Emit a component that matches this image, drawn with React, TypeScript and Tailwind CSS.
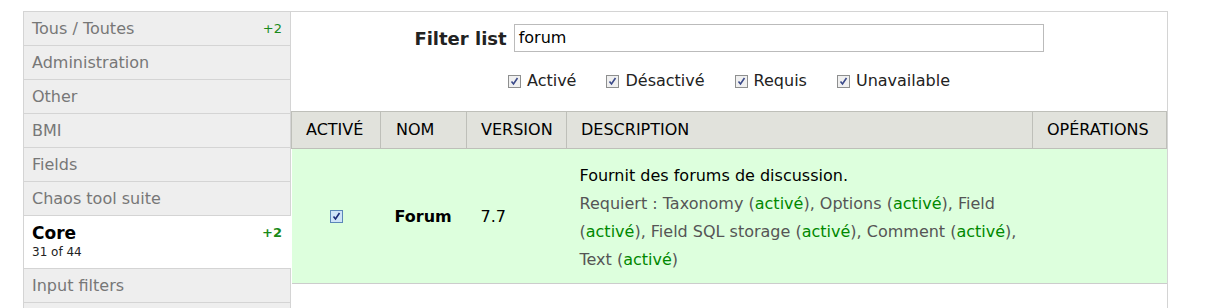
import React from 'react';

interface Category {
  label: string;
  count?: string;
  sub?: string;
  active?: boolean;
}

const categories: Category[] = [
  { label: 'Tous / Toutes', count: '+2' },
  { label: 'Administration' },
  { label: 'Other' },
  { label: 'BMI' },
  { label: 'Fields' },
  { label: 'Chaos tool suite' },
  { label: 'Core', count: '+2', sub: '31 of 44', active: true },
  { label: 'Input filters' },
];

const CheckBox: React.FC<{ focus?: boolean }> = ({ focus }) => (
  <span
    className={
      focus
        ? 'inline-flex w-[13px] h-[13px] items-center justify-center border border-[#5b87b8] bg-[#cfe4f8]'
        : 'inline-flex w-[13px] h-[13px] items-center justify-center border border-[#8e8f8f] bg-[#f0f0f0]'
    }
  >
    <svg width="9" height="9" viewBox="0 0 9 9">
      <path d="M1.5 4.5 L3.5 7 L7.5 1" fill="none" stroke={focus ? '#1a2a78' : '#3b4a8a'} strokeWidth="1.6" />
    </svg>
  </span>
);

const Ok: React.FC = () => <span className="text-[#008800]">activé</span>;

const App: React.FC = () => {
  return (
    <div className="w-[1205px] h-[308px] overflow-hidden bg-white pl-[23px] pt-[11px] font-['DejaVu_Sans',sans-serif]">
      <div className="flex items-start">
        {/* Sidebar */}
        <div className="w-[268px] border-l border-t border-[#d4d4d4]">
          {categories.map((c) =>
            c.active ? (
              <div key={c.label} className="bg-white border-b border-[#d4d4d4] pl-[8px] pr-[9px] pt-[6px] h-[53px]">
                <div className="flex justify-between items-center">
                  <span className="text-[17px] font-bold text-black leading-[22px]">{c.label}</span>
                  <span className="text-[13px] font-semibold text-[#1a8a1a]">{c.count}</span>
                </div>
                <div className="text-[12px] text-[#222] leading-[16px]">{c.sub}</div>
              </div>
            ) : (
              <div
                key={c.label}
                className="bg-[#eeeeee] border-b border-r border-[#d4d4d4] h-[34px] pl-[8px] pr-[8px] flex items-center justify-between"
              >
                <span className="text-[16px] text-[#777777]">{c.label}</span>
                {c.count && <span className="text-[13px] text-[#1a8a1a]">{c.count}</span>}
              </div>
            )
          )}
          <div className="bg-[#eeeeee] border-r border-[#d4d4d4] h-[34px]" />
        </div>

        {/* Main */}
        <div className="w-[877px] h-[300px] border-t border-r border-[#d4d4d4] bg-white">
          <div className="flex justify-center items-center gap-[7px] pt-[12px]">
            <label className="text-[18px] font-bold text-[#222]">Filter list</label>
            <div className="w-[530px] h-[28px] border border-[#bbbbbb] flex items-center px-[4px] text-[16px] text-black">forum</div>
          </div>
          <div className="flex justify-center items-center gap-[30px] mt-[17px] text-[16px] text-[#222]">
            {['Activé', 'Désactivé', 'Requis', 'Unavailable'].map((l) => (
              <span key={l} className="flex items-center gap-[6px]">
                <CheckBox />
                {l}
              </span>
            ))}
          </div>

          <table className="mt-[18px] w-[876px] border-collapse text-[16px]">
            <thead>
              <tr className="bg-[#e1e2dc] h-[37px] text-black uppercase">
                <th className="w-[89px] border border-[#bebfb9] text-left pl-[14px] font-normal">Activé</th>
                <th className="w-[86px] border border-[#bebfb9] text-left pl-[15px] font-normal">Nom</th>
                <th className="w-[100px] border border-[#bebfb9] text-left pl-[14px] font-normal">Version</th>
                <th className="border border-[#bebfb9] text-left pl-[14px] font-normal">Description</th>
                <th className="w-[134px] border border-[#bebfb9] text-left pl-[14px] font-normal">Opérations</th>
              </tr>
            </thead>
            <tbody>
              <tr className="bg-[#ddffdd] border-b border-[#cccccc] h-[135px]">
                <td className="text-center align-middle">
                  <CheckBox focus />
                </td>
                <td className="pl-[14px] pt-[2px] font-bold text-black">Forum</td>
                <td className="pl-[14px] pt-[2px] text-black">7.7</td>
                <td className="pl-[13px] pt-[3px] leading-[28px] whitespace-nowrap">
                  <div className="text-black">Fournit des forums de discussion.</div>
                  <div className="text-[#555555]">
                    Requiert : Taxonomy (<Ok />), Options (<Ok />), Field
                    <br />
                    (<Ok />), Field SQL storage (<Ok />), Comment (<Ok />),
                    <br />
                    Text (<Ok />)
                  </div>
                </td>
                <td></td>
              </tr>
            </tbody>
          </table>
        </div>
      </div>
    </div>
  );
};

export default App;
